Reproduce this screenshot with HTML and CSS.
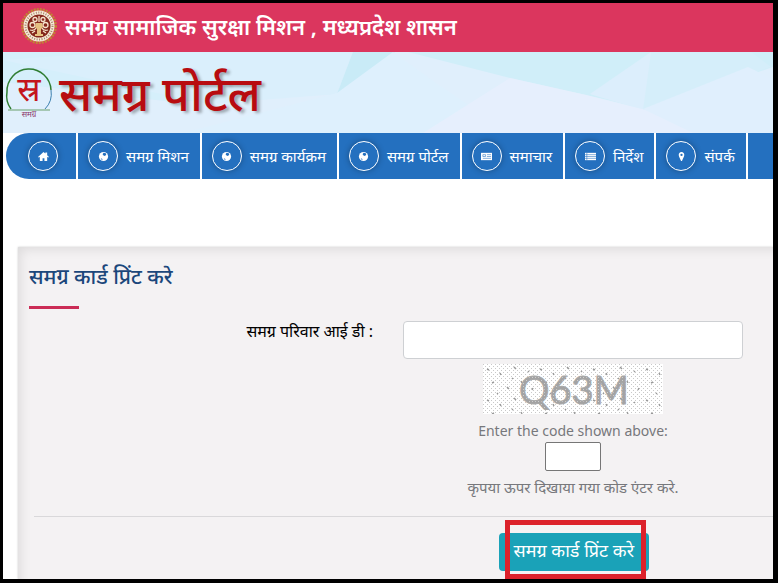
FILE: index.html
```html
<!DOCTYPE html>
<html lang="hi">
<head>
    <meta charset="UTF-8">
    <meta name="viewport" content="width=device-width, initial-scale=1.0">
    <title>समग्र पोर्टल</title>
    <link rel="stylesheet" href="styles.css">
</head>
<body>
    <header>
        <div class="top-bar">
            <svg class="emblem" viewBox="0 0 36 36" aria-hidden="true">
                <circle cx="18" cy="18" r="16.500" fill="none" stroke="#c08435" stroke-width="3" stroke-dasharray="2 1"/>
                <circle cx="18" cy="18" r="15.500" fill="#f6ead8"/>
                <circle cx="18" cy="18" r="13.500" fill="none" stroke="#a8856c" stroke-width="2" stroke-dasharray="1 1.500"/>
                <circle cx="18" cy="18" r="11.500" fill="#84281c"/>
                <g fill="none" stroke="#f6e3cc" stroke-width="1.3">
                    <circle cx="11.500" cy="17" r="2.500"/>
                    <circle cx="24.500" cy="17" r="2.500"/>
                    <circle cx="14" cy="11.500" r="2"/>
                    <circle cx="22" cy="11.500" r="2"/>
                    <path d="M18 8v6M9 22c3 1 5 0 6-2M27 22c-3 1-5 0-6-2M11 25l3-2M25 25l-3-2"/>
                </g>
                <path d="M15 15h6l1 4-2 2v5h2v2h-8v-2h2v-5l-2-2z" fill="#e5c182"/>
            </svg>
            <span>समग्र सामाजिक सुरक्षा मिशन , मध्यप्रदेश शासन</span>
        </div>

        <div class="banner">
            <svg class="banner-bg" viewBox="0 0 770 81" preserveAspectRatio="none" aria-hidden="true">
                <path d="M0 0h770v81H0z" fill="#e0effc"/>
                <path d="M0 0h355L335 42 170 50 0 30z" fill="#d5effb"/>
                <path d="M0 8l110-8h240l-15 42-130 10z" fill="#daeffc"/>
                <path d="M350 0h42l-58 42z" fill="#c9ebf7"/>
                <path d="M390 0l43 31 74 50H180l154-40z" fill="#def0fd"/>
                <path d="M405 0h365v15l-127 42-60-14L507 26z" fill="#d0eef9"/>
                <path d="M648 0l-61 42 53 16 128-43-20-15z" fill="#d5eefa"/>
                <path d="M648 0l-61 42 53 16 7-50z" fill="#dceefc"/>
                <path d="M507 26l76 17 60 15 60 23H420z" fill="#e6effd"/>
                <path d="M745 15l25 12v54H690l-50-24z" fill="#e0effd"/>
            </svg>
            <div class="brand">
                <svg class="brand-logo" viewBox="0 0 48 50" aria-hidden="true">
                    <path d="M6 41a22 22 0 0 1-4-17A22 22 0 0 1 46 22" fill="none" stroke="#2f7d32" stroke-width="1.500"/>
                    <path d="M46 22a22 22 0 0 1-6 19" fill="none" stroke="#3b7fae"/>
                    <path d="M3 42h42" stroke="#6ba06d"/>
                    <text class="logo-letter" x="24" y="33">स्र</text>
                    <text class="logo-caption" x="24" y="49">समग्र</text>
                </svg>
                <h1>समग्र पोर्टल</h1>
            </div>
        </div>

        <nav class="menu">
            <a href="#" aria-label="मुख्य पृष्ठ">
                <span class="icon"><svg viewBox="0 0 12 12"><path d="M0 6.500 6 1l2 1.800V1.500h2v3L12 6.500l-1 .5-1-.8V11H7V8H5v3H2V6.200L1 7z"/></svg></span>
            </a>
            <a href="#">
                <span class="icon"><svg viewBox="0 0 12 12"><circle cx="6" cy="6" r="5"/><path class="land" d="M6 2l2.500.5.5 1.500-1.500 1.500L6 5 5 3.500zM3 8l1.500.5.5 1.500-1-.5z"/></svg></span>
                समग्र मिशन
            </a>
            <a href="#">
                <span class="icon"><svg viewBox="0 0 12 12"><circle cx="6" cy="6" r="5"/><path class="land" d="M6 2l2.500.5.5 1.500-1.500 1.500L6 5 5 3.500zM3 8l1.500.5.5 1.500-1-.5z"/></svg></span>
                समग्र कार्यक्रम
            </a>
            <a href="#">
                <span class="icon"><svg viewBox="0 0 12 12"><circle cx="6" cy="6" r="5"/><path class="land" d="M6 2l2.500.5.5 1.500-1.500 1.500L6 5 5 3.500zM3 8l1.500.5.5 1.500-1-.5z"/></svg></span>
                समग्र पोर्टल
            </a>
            <a href="#">
                <span class="icon"><svg viewBox="0 0 12 12"><path d="M0 2h12v8H0z"/><path class="lines" d="M2 4h3v2H2zM6.500 4H11M6.500 6H11M2 8h9"/></svg></span>
                समाचार
            </a>
            <a href="#">
                <span class="icon"><svg viewBox="0 0 12 12"><path d="M0 2h12v8H0z"/><path class="lines" d="M2 2v8M0 4h12M0 6h12M0 8h12"/></svg></span>
                निर्देश
            </a>
            <a href="#">
                <span class="icon"><svg viewBox="0 0 12 12"><path fill-rule="evenodd" d="M6 1a3 3 0 0 1 3 3.500C9 6 7 9 6.500 11h-1C5 9 3 6 3 4.500A3 3 0 0 1 6 1zm0 2a1.200 1.200 0 1 0 0 2.500A1.200 1.200 0 0 0 6 3z"/></svg></span>
                संपर्क
            </a>
        </nav>
    </header>

    <main>
        <form class="panel">
            <h2>समग्र कार्ड प्रिंट करे</h2>

            <div class="form-row">
                <label for="family-id">समग्र परिवार आई डी :</label>
                <div class="field">
                    <input type="text" id="family-id" class="form-control">
                    <!-- Captcha -->
                    <svg class="captcha" viewBox="0 0 180 50" role="img" aria-label="Q63M">
                        <defs>
                            <pattern id="dots" width="4" height="4" patternUnits="userSpaceOnUse">
                                <path d="M0 0h1v1H0zM2 2h1v1H2z" fill="#c9c9c9"/>
                            </pattern>
                            <pattern id="specks" width="53" height="31" patternUnits="userSpaceOnUse">
                                <path d="M4 5l2 1M17 9l1 2M31 3l2 2M45 7l1 1M9 19l2-1M24 23l2 2M38 17l1 2M49 26l1-2M14 29l1 1M29 14l1 1" stroke="#999" stroke-width="1.500"/>
                            </pattern>
                            <pattern id="weave" width="3" height="3" patternUnits="userSpaceOnUse">
                                <path d="M0 0h3v3H0z" fill="#a3a3a3"/>
                                <path d="M1 1h1v1H1z" fill="#d0d0d0"/>
                            </pattern>
                        </defs>
                        <path d="M0 0h180v50H0z" fill="#fff"/>
                        <path d="M0 0h180v50H0z" fill="url(#dots)"/>
                        <path d="M0 0h180v50H0z" fill="url(#specks)"/>
                        <text x="91" y="40" class="captcha-text">Q63M</text>
                    </svg>
                    <label for="code" class="hint">Enter the code shown above:</label>
                    <input type="text" id="code" class="code">
                    <p class="note">कृपया ऊपर दिखाया गया कोड एंटर करे.</p>
                </div>
            </div>

            <div class="actions">
                <div class="marked">
                    <button type="submit">समग्र कार्ड प्रिंट करे</button>
                </div>
            </div>
        </form>
    </main>
</body>
</html>
```

FILE: styles.css
```css
* {
    box-sizing: border-box;
}
body {
    display: flex;
    flex-direction: column;
    height: 100vh;
    margin: 0;
    overflow: hidden;
    border: solid #000;
    border-width: 3px 5px 4px 3px;
    background-color: #fff;
    font-family: "Noto Sans", "Open Sans", sans-serif;
    font-size: 15px;
}
header {
    flex: none;
}
.top-bar {
    display: flex;
    align-items: center;
    gap: 8px;
    height: 49px;
    padding: 0 0 3px 18px;
    background-color: #db365e;
    color: #fff;
    font-size: 22px;
    font-weight: 600;
    white-space: nowrap;
}
.emblem {
    width: 36px;
    height: 36px;
}
.banner {
    display: grid;
    height: 81px;
    overflow: hidden;
}
.banner-bg,
.brand {
    grid-area: 1 / 1;
    width: 100%;
    height: 81px;
}
.brand {
    display: flex;
    align-items: center;
    gap: 6px;
    padding-left: 2px;
}
.brand-logo {
    width: 48px;
    height: 50px;
    overflow: visible;
}
.logo-letter {
    fill: #c4151c;
    font-size: 34px;
    text-anchor: middle;
}
.logo-caption {
    fill: #8c3a6c;
    font-size: 8px;
    text-anchor: middle;
}
h1 {
    margin: 0;
    color: #b80c10;
    font-size: 48px;
    font-weight: 500;
    line-height: 80px;
    text-shadow: 3px 2px 3px rgba(0, 0, 0, 0.3);
    white-space: nowrap;
}
.menu {
    display: flex;
    gap: 2px;
    height: 46px;
    padding-left: 3px;
}
.menu::after {
    content: "";
    flex: 1;
    background-color: #2470bf;
}
.menu a {
    display: flex;
    align-items: center;
    gap: 8px;
    padding: 0 11px 0 10px;
    background-color: #2470bf;
    color: #fff;
    text-decoration: none;
    white-space: nowrap;
}
.menu a:first-child {
    padding: 0 18px 0 22px;
    border-radius: 23px 0 0 23px;
}
.icon {
    display: grid;
    place-items: center;
    width: 30px;
    height: 30px;
    border: 1px solid #fff;
    border-radius: 50%;
    box-shadow: 0 0 6px rgba(0, 0, 0, 0.3);
}
.icon svg {
    width: 11px;
    height: 11px;
    fill: #fff;
}
.icon .land {
    fill: #2470bf;
}
.icon .lines {
    fill: none;
    stroke: #2470bf;
    stroke-width: 0.6;
}
main {
    flex: 1;
    display: flex;
    min-height: 0;
    padding: 68px 0 0 15px;
}
.panel {
    flex: 1;
    padding: 14px 0 0 11px;
    background-color: #f4f2f3;
    box-shadow: inset 8px 8px 12px -6px rgba(0, 0, 0, 0.1), 0 0 2px rgba(0, 0, 0, 0.2);
}
h2 {
    margin: 0;
    color: #1c477b;
    font-size: 21px;
    font-weight: 500;
    line-height: 30px;
}
h2::after {
    content: "";
    display: block;
    width: 50px;
    height: 3px;
    margin-top: 15px;
    background-color: #cb2c56;
}
.form-row {
    display: flex;
    justify-content: flex-end;
    gap: 30px;
    margin: 12px 30px 0 0;
}
.form-row > label {
    color: #000;
    font-size: 16px;
    line-height: 20px;
}
.field {
    display: flex;
    flex-direction: column;
    align-items: center;
    width: 48%;
    max-width: 340px;
    color: #77787c;
}
.form-control {
    width: 100%;
    height: 38px;
    border: 1px solid #ced0d3;
    border-radius: 4px;
    background-color: #fff;
}
.captcha {
    width: 180px;
    height: 50px;
    margin-top: 5px;
}
.captcha-text {
    fill: url(#weave);
    stroke: #a8a8a8;
    font-family: Lato, sans-serif;
    font-size: 38px;
    text-anchor: middle;
}
.hint {
    margin-top: 5px;
    font-family: "Noto Sans", sans-serif;
    font-size: 14px;
    line-height: 23px;
}
.code {
    width: 56px;
    height: 29px;
    border: 1px solid #767676;
    border-radius: 2px;
    background-color: #fff;
}
.note {
    margin: 4px 0 0;
    line-height: 24px;
}
.actions {
    display: flex;
    justify-content: flex-end;
    margin: 17px 0 0 5px;
    padding: 16px 124px 0 0;
    border-top: 1px solid #d9d8da;
}
.marked {
    position: relative;
}
/* highlight frame over the submit button */
.marked::after {
    content: "";
    position: absolute;
    inset: -13px 3px -8px 6px;
    border: 5px solid #dc222b;
    pointer-events: none;
}
button {
    height: 38px;
    padding: 0 15px 4px;
    border: 0;
    border-radius: 4px;
    background-color: #1aa2b8;
    color: #fff;
    font-family: inherit;
    font-size: 18px;
}
```
